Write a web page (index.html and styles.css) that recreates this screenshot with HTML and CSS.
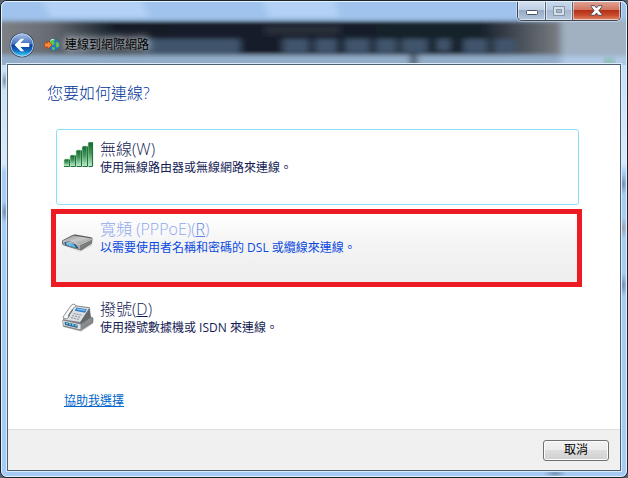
FILE: index.html
```html
<!DOCTYPE html>
<html lang="zh-Hant">
<head>
    <meta charset="UTF-8">
    <meta name="viewport" content="width=device-width, initial-scale=1.0">
    <title>連線到網際網路</title>
    <link rel="stylesheet" href="styles.css">
</head>
<body>
    <div class="window">
        <header class="titlebar">
            <!-- blurred desktop behind the glass -->
            <svg class="backdrop" viewBox="0 0 628 64" preserveAspectRatio="none" aria-hidden="true">
                <defs>
                    <filter id="haze" x="-10%" y="-50%" width="120%" height="200%"><feGaussianBlur stdDeviation="4 2"/></filter>
                    <linearGradient id="dusk" x1="0" y1="0" x2="1" y2="0">
                        <stop offset="0" stop-color="#878b90"/>
                        <stop offset=".12" stop-color="#666b71"/>
                        <stop offset=".23" stop-color="#151e28"/>
                        <stop offset=".86" stop-color="#17202b"/>
                        <stop offset=".94" stop-color="#50575f"/>
                        <stop offset="1" stop-color="#7b7f84"/>
                    </linearGradient>
                </defs>
                <rect width="628" height="64" fill="#9cbadb"/>
                <g filter="url(#haze)">
                    <path d="M-20-20H648V19H-20z" fill="#9fc3ec"/>
                    <path d="M30-20H130L150 16H50zM255-20h75l10 36h-72z" fill="#b2d1f4"/>
                    <path d="M-20 54H648V90H-20z" fill="#93adc9"/>
                    <path d="M-20 20H562V54H-20z" fill="url(#dusk)"/>
                    <path d="M265 24h75v10h-75z" fill="#272e37"/>
                    <path d="M145 38h95v15h-95zM283 38h26v14h-26zM315 38h22v14h-22zM345 38h25v14h-25zM376 38h21v14h-21zM402 38h26v14h-26zM437 38h14v12h-14zM464 38h24v14h-24zM495 38h22v14h-22z" fill="#40556c"/>
                    <path d="M562 18h80v36h-80z" fill="#a1b1c2"/>
                    <path d="M562 55h80v20h-80z" fill="#b0c9e4"/>
                    <path d="M411 52h6v20h-6z" fill="#26323f"/>
                </g>
                <circle cx="610" cy="61" r="5" fill="#75b891" opacity=".7" filter="url(#haze)"/>
            </svg>
            <div class="controls">
                <button type="button" class="control" aria-label="最小化">
                    <svg width="14" height="8" viewBox="0 0 14 8"><rect x="1.5" y="3.5" width="11" height="4" rx="1" fill="#fff" stroke="#4b4f63"/></svg>
                </button>
                <button type="button" class="control control-max" aria-label="最大化" disabled>
                    <svg width="12" height="10" viewBox="0 0 12 10"><path d="M.5.5h11v9H.5zM3.5 3.5h5v3h-5z" fill="#d5dee8" fill-rule="evenodd" stroke="#8695a5"/></svg>
                </button>
                <button type="button" class="control control-close" aria-label="關閉">
                    <svg width="13" height="11" viewBox="0 0 13 11"><path d="M1 .7h3.600l1.900 2.200L8.400.7H12v1L8.900 5.500 12 9.300v1H8.400L6.500 8.100 4.600 10.300H1v-1L4.100 5.500 1 1.700z" fill="#fff" stroke="#51505e"/></svg>
                </button>
            </div>
            <div class="caption">
                <button type="button" class="back" aria-label="上一頁">
                    <svg width="26" height="26" viewBox="0 0 26 26">
                        <defs>
                            <linearGradient id="ball" x1="0" y1="0" x2="0" y2="1">
                                <stop offset="0" stop-color="#a9c1e6"/>
                                <stop offset=".46" stop-color="#416fbd"/>
                                <stop offset=".5" stop-color="#083c95"/>
                                <stop offset=".75" stop-color="#126bc4"/>
                                <stop offset="1" stop-color="#42dcfa"/>
                            </linearGradient>
                        </defs>
                        <circle cx="13" cy="13" r="12.300" fill="#283c61"/>
                        <circle cx="13" cy="13" r="11.300" fill="url(#ball)" stroke="#c3d5ec"/>
                        <path d="M5.500 13l6.300-6.200h3.400L11.500 11h8.800v4h-8.800l3.700 4.200h-3.400z" fill="#fff"/>
                    </svg>
                </button>
                <svg class="caption-icon" width="16" height="14" viewBox="0 0 16 14">
                    <circle cx="10" cy="6.800" r="5.800" fill="#2379c9" stroke="#2b5d96" stroke-width=".6"/>
                    <path d="M6 3c1.500-2 4-2.300 5-1.500L9.800 3.800 11 5 8.500 7.500 6 6zM13.200 3.200l2 2.800-.4 3-2.300.5-1-3zM8 9l3 .6-.6 2.500-2 .2z" fill="#65c447"/>
                    <path d="M6.500 2.500q1.500-1.300 3-1.200" stroke="#d9f3fb" fill="none"/>
                    <path d="M.5 5h3.300V2.600L8 7l-4.200 4.200V9H.5z" fill="#f58a3c" stroke="#b6440e" stroke-width=".8"/>
                </svg>
                <span class="caption-text">連線到網際網路</span>
            </div>
        </header>

        <main class="panel">
            <div class="content">
                <h1>您要如何連線?</h1>

                <div class="options">
                    <button type="button" class="option option-focus">
                        <svg class="option-icon" width="32" height="32" viewBox="0 0 32 32">
                            <defs>
                                <linearGradient id="bar" x1="0" y1="0" x2="0" y2="1">
                                    <stop offset="0" stop-color="#13682b"/>
                                    <stop offset=".45" stop-color="#41925a"/>
                                    <stop offset="1" stop-color="#b7eec8"/>
                                </linearGradient>
                            </defs>
                            <g fill="url(#bar)" stroke="#b9e3c5" stroke-width=".6">
                                <path d="M2 18l1-1h4v7H2z"/>
                                <path d="M8 14l1-1h4v11H8z"/>
                                <path d="M14 9l1-1h4v16h-5z"/>
                                <path d="M20 5l1-1h4v20h-5z"/>
                                <path d="M26 1l1-1h4v24h-5z"/>
                            </g>
                            <path d="M2 24.500h5.500v-7M8.500 24.500h5v-11M14.500 24.500h5v-16M20.500 24.500h5v-20M26.500 24.500h4v-24" stroke="#23713a" fill="none"/>
                        </svg>
                        <span class="option-text">
                            <span class="option-title">無線(W)</span>
                            <span class="option-desc">使用無線路由器或無線網路來連線。</span>
                        </span>
                    </button>

                    <button type="button" class="option option-marked">
                        <svg class="option-icon" width="32" height="32" viewBox="0 0 32 32">
                            <defs>
                                <linearGradient id="lid" x1="0" y1="0" x2="1" y2="1">
                                    <stop offset="0" stop-color="#8b8b8b"/>
                                    <stop offset=".5" stop-color="#c9c9c9"/>
                                    <stop offset="1" stop-color="#929292"/>
                                </linearGradient>
                            </defs>
                            <path d="M3 22l15 7 12-7v2l-12 6L3 24z" fill="#ddd"/>
                            <path d="M0 19.500q0-1 1.500-1.800L10.500 13q1.500-.7 3-.5l15.500 2.700q1.500.3 1.500 1.500L30 21.500 19 28.500 2 23.500Q.3 23 0 21z" fill="#55585b"/>
                            <path d="M1 18.800l10.300-5.400 18.500 3L18.500 22z" fill="url(#lid)"/>
                            <path d="M.7 19.300l17.800 3.200v5.300L2 23Q.7 22.300.7 19.300z" fill="#a9acae"/>
                            <path d="M2.500 19.600q9-2 14.500 7.200L4 23.200Q2.300 22 2.500 19.600z" fill="#1d4e74"/>
                            <path d="M4 21.200q6.500-.5 10.500 4.600l-9.500-2.600z" fill="#62bdea"/>
                            <path d="M4 21.200q6.500-.5 8.500 2.500" stroke="#c2ecfb" stroke-width=".7" fill="none"/>
                            <path d="M18.500 22.500L30 17v4.200l-11.500 6.800z" fill="#7b7d7f"/>
                            <path d="M1 19.200l17.500 3.200L30 17" stroke="#e6e6e6" stroke-width=".8" fill="none"/>
                        </svg>
                        <span class="option-text">
                            <span class="option-title">寬頻 (PPPoE)(<u>R</u>)</span>
                            <span class="option-desc">以需要使用者名稱和密碼的 DSL 或纜線來連線。</span>
                        </span>
                    </button>

                    <button type="button" class="option">
                        <svg class="option-icon" width="32" height="32" viewBox="0 0 32 32">
                            <path d="M1 23.500l17.500 4.500L31 19v2.500L19 29.500 1.500 25z" fill="#b5b5b5"/>
                            <path d="M.8 18.500L12 3.500l15.500 2.200 1 9.300 2.500 1v4L18.500 28 1.200 24z" fill="#7d8286" stroke="#5b5f63" stroke-width=".6"/>
                            <path d="M2 17.500L12.500 4l14.800 2.200-9 13.800z" fill="#dde0e2"/>
                            <path d="M18.300 20L27.300 6.200 28.500 15.500 19 22.500z" fill="#63676b"/>
                            <path d="M18.500 22.500l10-6.500 2 .6v3L18.500 27.500z" fill="#888c8f"/>
                            <path d="M14.500 5.500l10.500 1.700-2 3.500-10.200-2z" fill="#2f7bc6"/>
                            <path d="M15.300 6.400l8.400 1.400-.8 1.300-8.200-1.400z" fill="#82c5f1"/>
                            <path d="M11.500 11.500l9 1.700M10.200 13.600l9 1.800M9 15.700l8.500 1.800" stroke="#949ba2" stroke-width="1.200" stroke-dasharray="2 1"/>
                            <path d="M1 18.500l17.500 4v5L1.500 23.500z" fill="#e2e4e5"/>
                            <path d="M2.500 19.700l13 3v3.300L3 23z" fill="#2a5f84"/>
                            <path d="M4 21.300l11 2.600" stroke="#6fc9ee" stroke-width="1.600" stroke-dasharray="2 1"/>
                            <path d="M1.500 16.500q-1-1.500.5-3L9.500 3q1.500-1.500 3.500-.5 1.300 1 .2 2.300l-2.200 1.700-4.600 6.500.2 2.500q-1.600 2-5.100 1z" fill="#f8f8f8" stroke="#737980" stroke-width=".8"/>
                            <path d="M7 14.500L7.500 12.500 11 7.500" stroke="#555a60" fill="none"/>
                        </svg>
                        <span class="option-text">
                            <span class="option-title">撥號(<u>D</u>)</span>
                            <span class="option-desc">使用撥號數據機或 ISDN 來連線。</span>
                        </span>
                    </button>
                </div>

                <a class="help" href="#">協助我選擇</a>
            </div>

            <footer class="footer">
                <button type="button" class="cancel">取消</button>
            </footer>
        </main>
    </div>
</body>
</html>
```

FILE: styles.css
```css
:root {
    --glass: #a9cdf2;
    --frame: #1a222c;
    --panel-edge: #4b6073;
    --heading: #003399;
    --option-text: #151c55;
    --marker: #ed1c24;
}
* {
    box-sizing: border-box;
}
body {
    margin: 0;
    font-family: "Open Sans", "Noto Sans CJK TC", sans-serif;
    font-size: 12px;
    line-height: 16px;
    background: #59636e;
}
button {
    font: inherit;
    padding: 0;
    border: 0;
    background: none;
}
.window {
    position: relative;
    display: flex;
    flex-direction: column;
    min-height: 100vh;
    padding: 0 6px 6px;
    border: 1px solid var(--frame);
    border-radius: 7px;
    overflow: hidden;
    background:
        radial-gradient(#5b6f8aaa, #5b6f8a00 70%) 0 70px / 7px 20px no-repeat,
        radial-gradient(#5b6f8aaa, #5b6f8a00 70%) 0 200px / 7px 22px no-repeat,
        radial-gradient(#5b6f8aaa, #5b6f8a00 70%) 100% 172px / 7px 22px no-repeat,
        radial-gradient(#a0867faa, #a0867f00 70%) 100% 216px / 7px 22px no-repeat,
        radial-gradient(#5b6f8aaa, #5b6f8a00 70%) 100% 272px / 7px 24px no-repeat,
        radial-gradient(#5b6f8aaa, #5b6f8a00 70%) 90% 100% / 24px 7px no-repeat,
        linear-gradient(#bdd8f2, #d8eaf9 34%, var(--glass) 36%, #a6cbf4);
}
/* light inner rim of the frame */
.window::after {
    content: '';
    position: absolute;
    inset: 0;
    border: 1px solid #e4f1fc;
    border-radius: 6px;
    pointer-events: none;
}

.titlebar {
    display: flex;
    flex-direction: column;
    height: 63px;
}
.backdrop {
    position: absolute;
    top: 0;
    left: 0;
    width: 100%;
    height: 64px;
}
.controls {
    position: relative;
    display: flex;
    align-self: flex-end;
    height: 20px;
    border: 1px solid #3b4656;
    border-top: 0;
    border-radius: 0 0 5px 5px;
    overflow: hidden;
    box-shadow: 0 0 0 1px #ffffff66;
}
.control {
    display: flex;
    align-items: center;
    justify-content: center;
    width: 28px;
    border-right: 1px solid #56657a;
    background: linear-gradient(#d5e2f1, #bdcfe3 48%, #97abc3 50%, #b2c5db);
    box-shadow: inset 0 0 0 1px #ffffff88;
}
.control-max {
    width: 27px;
    background: linear-gradient(#c7d9ed, #b8cbe1 48%, #a5b8cf 50%, #b7c8dd);
}
.control-close {
    width: 47px;
    border-right: 0;
    background: linear-gradient(#e3a595, #d0745f 48%, #b62f17 50%, #c64b2c 75%, #e38b6c);
}
.caption {
    position: relative;
    display: flex;
    align-items: center;
    flex: 1;
    gap: 5px;
    padding: 4px 0 0 2px;
}
.back {
    height: 26px;
}
.caption-icon {
    margin-left: 4px;
}
.caption-text {
    color: #000;
    text-shadow: 0 0 6px #bcc3cb, 0 0 8px #bcc3cb, 0 0 12px #bcc3cb;
}

.panel {
    position: relative;
    display: flex;
    flex-direction: column;
    flex: 1;
    border: 1px solid var(--panel-edge);
    background: #fff;
    box-shadow: 0 0 0 1px #dcebf8;
}
.content {
    flex: 1;
    padding: 16px 41px 16px 39px;
}
h1 {
    margin: 0;
    color: var(--heading);
    font-size: 16px;
    font-weight: 300;
    line-height: 24px;
}
.options {
    display: flex;
    flex-direction: column;
    gap: 4px;
    margin: 24px 0 0 9px;
}
.option {
    display: flex;
    gap: 6px;
    height: 76px;
    padding: 8px 5px;
    border: 1px solid transparent;
    border-radius: 3px;
    color: var(--option-text);
    text-align: left;
}
.option-focus {
    border-color: #87e0fa;
}
.option-marked {
    height: 78px;
    margin: 0 -3px -2px -5px;
    padding: 4px 6px;
    border: 5px solid var(--marker);
    border-radius: 0;
    background: linear-gradient(#fff, #f4f4f4 45%, #eee);
    color: #0a49e0;
}
.option-icon {
    flex: none;
    margin-top: 4px;
}
.option-text,
.option-title,
.option-desc {
    display: block;
}
.option-title {
    font-size: 16px;
    font-weight: 300;
    line-height: 22px;
}
.option-marked .option-title {
    color: #8fa8ee;
}
.option-marked u {
    color: #5f83e4;
}
.help {
    display: inline-block;
    margin: 28px 0 0 17px;
    color: #0066cc;
}

.footer {
    display: flex;
    align-items: center;
    justify-content: flex-end;
    height: 41px;
    padding: 0 11px;
    border-top: 1px solid #dfdfdf;
    background: #f0f0f0;
}
.cancel {
    width: 66px;
    height: 21px;
    border: 1px solid #707070;
    border-radius: 3px;
    background: linear-gradient(#f2f2f2, #ebebeb 48%, #dddddd 50%, #cfcfcf);
    box-shadow: inset 0 0 0 1px #fcfcfc;
    color: #000;
}
```
